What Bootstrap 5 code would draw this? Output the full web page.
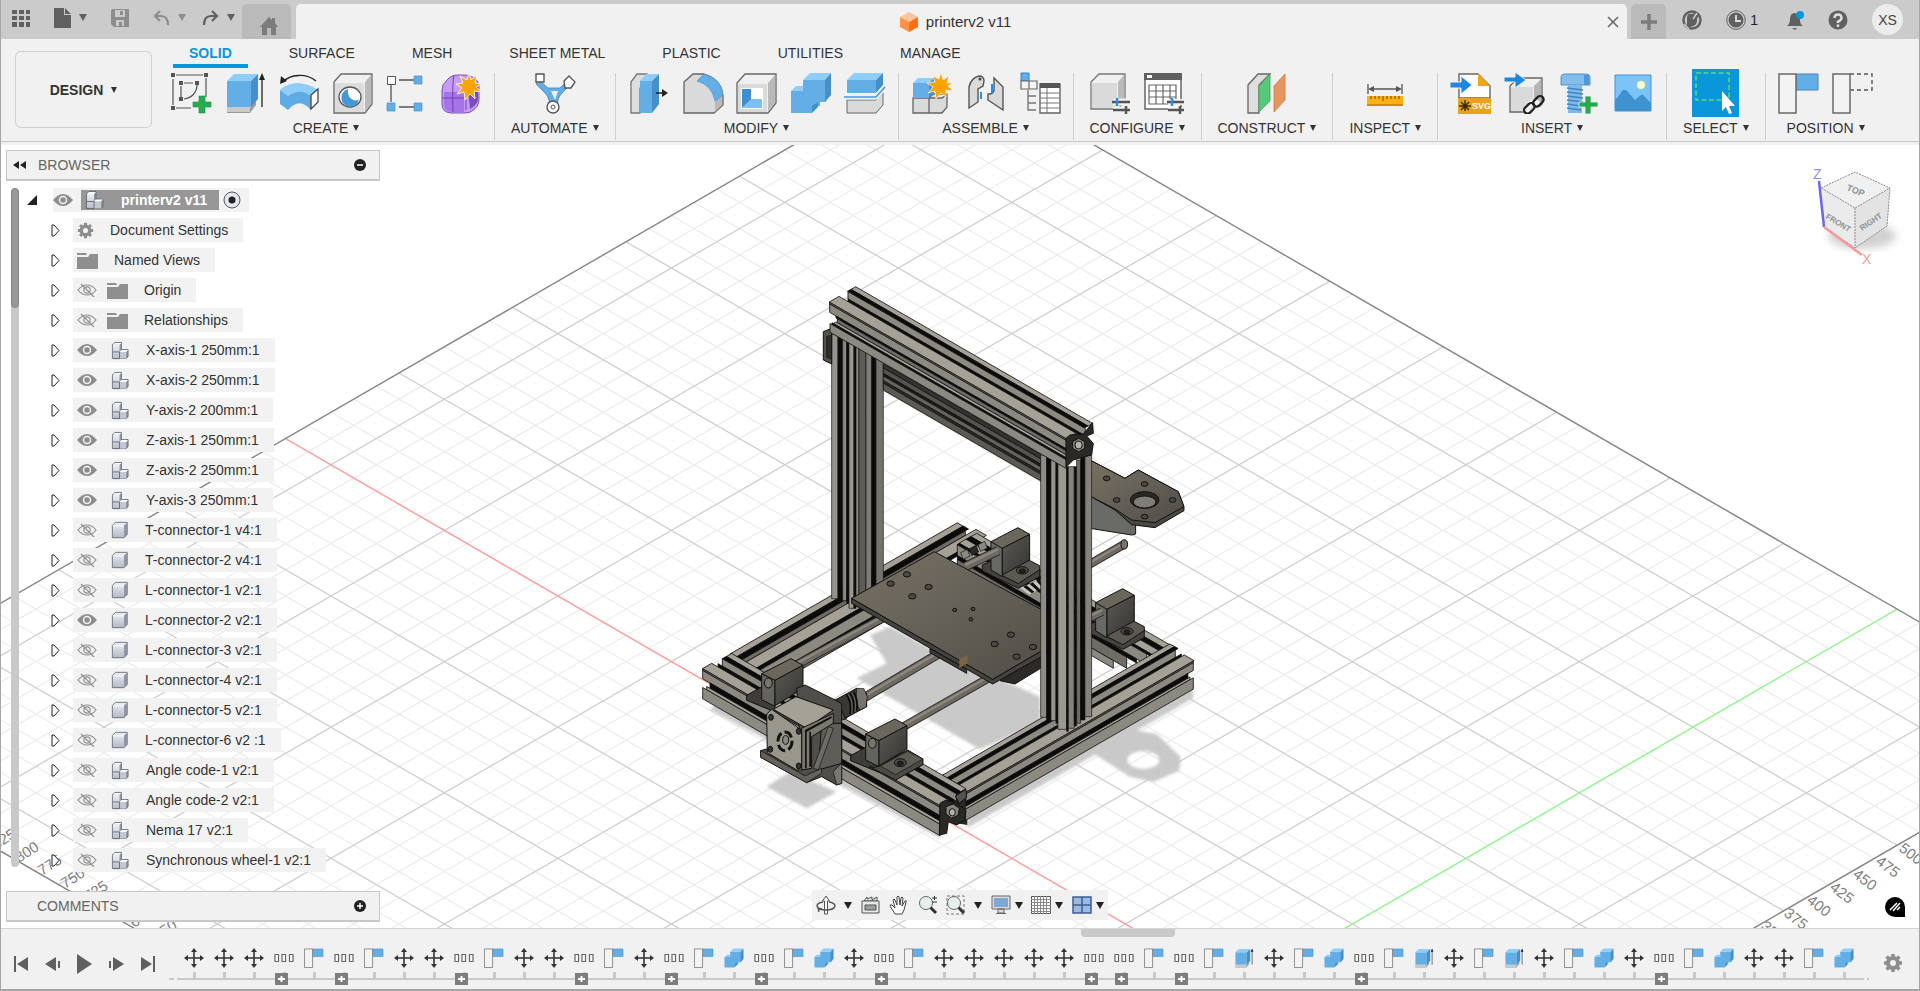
<!DOCTYPE html>
<html lang="en">
<head>
<meta charset="utf-8">
<meta name="viewport" content="width=device-width, initial-scale=1">
<title>printerv2 v11</title>
<link href="https://cdn.jsdelivr.net/npm/bootstrap@5.3.0/dist/css/bootstrap.min.css" rel="stylesheet">
<style>
  body { font: 14px/20px "Liberation Sans", Arial, sans-serif; color: #333; background: #f1f1f1; }
  button { background: none; border: 0; padding: 0; color: inherit; line-height: inherit; }
  svg { display: block; flex: none; }
  .app { border: solid #a6a6a6; border-width: 0 1px 2px; }
  .tri { width: 0; height: 0; border: 4px solid transparent; border-top: 7px solid currentColor; border-bottom: 0; }
  .ribbon .tri { border-width: 6px 3px 0; }
  .titlebar { background: #cbcbcb; height: 39px; color: #606060; padding-left: 11px; }
  .quick { width: 230px; }
  .faded { color: #8d8d8d; }
  .home-tab, .plus-tab { background: #bababa; height: 35px; border-radius: 5px 5px 0 0; color: #7c7c7c; }
  .home-tab { width: 49px; margin-right: 5px; }
  .plus-tab { width: 35px; }
  .doc-tab { background: #f1f1f1; height: 35px; border-radius: 5px 5px 0 0; font-size: 15px; color: #333; }
  .avatar { width: 31px; height: 31px; border-radius: 50%; background: #ececec; color: #444; }
  .ribbon { border-bottom: 1px solid #c9c9c9; height: 103px; }
  .under { height: 3px; }
  .workspace { width: 157px; padding: 12px 6px 0 14px; }
  .workspace button { height: 77px; border: 1px solid #cfcfcf; border-radius: 6px; }
  .tabs { gap: 25px; height: 30px; padding-left: 15px; }
  .tabs a { color: #333; text-decoration: none; padding: 4px 16px 0; height: 29px; }
  .tabs a.on { color: #0a96db; font-weight: 700; border-bottom: 4px solid #0a96db; }
  .tool-group { height: 67px; padding: 0 6px; }
  .tool-group + .tool-group { border-left: 1px solid #cfcfcf; }
  .cells { height: 49px; margin-top: -4px; }
  .cell { width: 54px; height: 48px; }
  .group-label { padding: 0 10px; gap: 5px; }
  .view { background: #fff; min-height: 0; }
  .panel { border: 1px solid #c8c8c8; border-bottom-width: 2px; background: #f1f1f1; width: 374px; height: 31px; color: #666; padding: 0 13px 0 6px; }
  .side { position: absolute; top: 5px; bottom: 6px; left: 5px; }
  .tree { list-style: none; }
  .tree li { height: 30px; }
  .tree .label-box { background: #f2f2f2; height: 24px; padding-right: 15px; color: #333; }
  .track { width: 8px; background: #c8c9cb; border-radius: 4px; margin: 7px 0 24px 5px; }
  .thumb { height: 120px; background: #999; border: 1px solid #858585; border-radius: 4px; }
  .arrow { width: 30px; }
  .eye { width: 26px; }
  .root-name { background: #979797; color: #fff; font-weight: 700; height: 20px; }
  .navbar-view { position: absolute; bottom: 8px; left: 50%; margin-left: -148px; width: 296px; height: 30px; background: #f1f1f1; color: #222; }
  .assist { position: absolute; right: 14px; bottom: 11px; }
  .cube { position: absolute; right: 15px; top: 15px; }
  .timeline { height: 61px; border-top: 1px solid #d4d4d4; position: relative; color: #606060; }
  .handle { position: absolute; top: 0; left: 1080px; width: 94px; height: 8px; background: #c9c9c9; border-radius: 0 0 4px 4px; }
  .transport { width: 152px; padding-top: 10px; }
  .steps { margin-left: 16px; }
  .step { width: 30px; height: 60px; padding-top: 19px; position: relative; }
  .step::after { content: ""; position: absolute; left: 0; right: 0; top: 43px; height: 8px; border-bottom: 2px solid #c9c9c9; background: linear-gradient(#c9c9c9,#c9c9c9) 14px 0/3px 8px no-repeat; }
  .step .plus { position: absolute; left: 6px; top: 44px; z-index: 1; }
  .dash { width: 10px; height: 2px; margin-top: 49px; background: linear-gradient(90deg,#c9c9c9 60%,transparent 60%) 0 0/8px 2px; }
</style>
</head>
<body>
<svg width="0" height="0" class="position-absolute" aria-hidden="true">
  <defs>
    <linearGradient id="gb" x1="0" y1="0" x2="0" y2="1"><stop offset="0" stop-color="#eef0f4"/><stop offset="1" stop-color="#b4b9c6"/></linearGradient>
    <linearGradient id="plateg" x1="0" y1="0" x2="1" y2="1"><stop offset="0" stop-color="#77705f"/><stop offset=".35" stop-color="#6b665c"/><stop offset="1" stop-color="#504d47"/></linearGradient>
    <linearGradient id="bodyg" x1="0" y1="0" x2="1" y2="1"><stop offset="0" stop-color="#5e5b54"/><stop offset="1" stop-color="#34332f"/></linearGradient>
    <filter id="soft"><feGaussianBlur stdDeviation="4"/></filter>
  </defs>
  <symbol id="i-sketch" viewBox="0 0 42 42"><g fill="none" stroke="#555" stroke-width="1.2"><path d="M6 3h27M3 7v26M36 6v19M6 36h15M14 11h9M11 14v11M27 13c0 7-5 13-13 14"/></g><path fill="#555" d="M1 1h4v4H1zM34 1h4v4h-4zM1 34h4v4H1zM9 9h4v4H9zM25 9h4v4h-4zM9 25h4v4H9z"/><path fill="#26ab4e" stroke="#1c9440" stroke-width=".6" d="M29 24h6v6h6v5h-6v6h-6v-6h-6v-5h6z"/></symbol>
  <symbol id="i-extrude" viewBox="0 0 42 42"><path fill="#999" d="M3 36h23l6-7v4l-6 8H3z"/><path fill="#c9c9c9" d="M3 35h23v5H3z"/><path fill="#64aee6" d="M3 9h24v26H3z"/><path fill="#8fcdfb" d="M3 9l7-7h24l-7 7z"/><path fill="#4590cb" d="M27 9l7-7v25l-7 8z"/><path stroke="#222" stroke-width="1.3" d="M38 4v31"/><path fill="#222" d="M38 1l3 7h-6z"/></symbol>
  <symbol id="i-revolve" viewBox="0 0 42 42"><path fill="#8fcdfb" d="M2 18C10 9 28 9 40 18l-7 6c-8-6-15-6-23 0z"/><path fill="#5fabe4" d="M2 18l8 6v14l-8-6zM10 24c8-6 15-6 23 0v14c-8-9-15-9-23 0z"/><path fill="#fff" stroke="#444" stroke-width="1.3" d="M33 23l7-6v13l-7 7z"/><path fill="none" stroke="#222" stroke-width="1.3" d="M5 10C12 2 28 1 38 9"/><path fill="#222" d="M2 12l1-8 6 5z"/></symbol>
  <symbol id="i-hole" viewBox="0 0 42 42"><path fill="#f0f0f0" stroke="#6a6a6a" stroke-width="1.3" d="M2 10l7-8h31v30l-7 9H2z"/><path fill="#dcdcdc" d="M3 11h29v29H3z"/><path fill="#b9b9b9" d="M33 10l6-7v29l-6 8z"/><ellipse cx="18" cy="25" rx="11" ry="10" fill="#fff" stroke="#555" stroke-width="1.3"/><path fill="#4898d6" d="M16 17a9 9 0 1 0 11 11c-7 2-12-3-11-11z"/></symbol>
  <symbol id="i-pattern" viewBox="0 0 42 42"><path stroke="#555" stroke-width="1.3" d="M13 8h16M5 13v17M13 35h16"/><path fill="#fff" stroke="#555" d="M1.5 4.500h8v8h-8z"/><path fill="#64aee6" stroke="#4a90c8" stroke-width=".7" d="M28 4h8v8h-8zM28 31h8v8h-8zM1 31h8v8H1z"/></symbol>
  <symbol id="i-form" viewBox="0 0 42 42"><path fill="#c69cf8" stroke="#7b53b8" d="M2 18q0-6 5-10 4-5 11-5h8q12 2 13 11v13q0 8-7 12-2 2-8 2H12Q2 41 2 32z"/><path fill="#a673e8" d="M4 20h20v20H12q-8 0-8-8z"/><path fill="#7b4bc0" d="M28 18l10-5v14q0 5-8 10z"/><path fill="none" stroke="#6d45ae" d="M2 26h24l12-7M14 3q-2 7-1 37M26 18v20"/><path fill="#f9a400" stroke="#f1f1f1" stroke-width="1" d="M29 0l2 8 6-5-2 8 7 1-6 3 6 5-8-1 1 8-5-5-5 6-1-8-7 2 5-6-6-4 7-1-3-7 7 4z"/></symbol>
  <symbol id="i-auto" viewBox="0 0 42 42"><path fill="#64aee6" stroke="#3f86be" stroke-width=".8" d="M5 8l9 8h12l8-8 3 4-9 9q-6 6-4 16h-9q2-10-4-16l-9-9z"/><path fill="#f1f1f1" d="M17 19h7l-3 9z"/><path fill="#fff" stroke="#555" stroke-width="1.4" d="M2 2h8v8H2zM30 9l5-5 6 6-4 6h-6z"/><circle cx="19" cy="35" r="6" fill="#fff" stroke="#555" stroke-width="1.4"/><circle cx="19" cy="35" r="2" fill="none" stroke="#555"/></symbol>
  <symbol id="i-press" viewBox="0 0 42 42"><path fill="#dedede" stroke="#777" stroke-width="1.3" d="M3 10l6-8h10v8l-7 6v25H3z"/><path fill="#64aee6" d="M12 9h12v32H12z"/><path fill="#8fcdfb" d="M12 9l6-7h13l-7 7z"/><path fill="#4590cb" d="M24 9l7-7v30l-7 9z"/><path stroke="#222" stroke-width="1.5" d="M28 21h9"/><path fill="#222" d="M34 17l6 4-6 4z"/></symbol>
  <symbol id="i-fillet" viewBox="0 0 42 42"><path fill="#dadada" stroke="#666" stroke-width="1.3" d="M2 10l9-8h11q17 5 19 22v9l-9 8H2z"/><path fill="#b9b9b9" d="M33 28l7-4v9l-7 7z"/><path fill="#64aee6" stroke="#4590cb" stroke-width=".7" d="M15 9l7-7q18 5 19 21l-8 6Q30 13 15 9z"/></symbol>
  <symbol id="i-shell" viewBox="0 0 42 42"><path fill="#f0f0f0" stroke="#666" stroke-width="1.3" d="M1 11l8-9h31v29l-8 10H1z"/><path fill="#dadada" d="M2 12h29v28H2z"/><path fill="#b9b9b9" d="M32 11l7-8v28l-7 8z"/><path fill="#fff" d="M5 16h22v21H5z"/><path fill="#3f8fd0" d="M6 17h9v11l-9 8z"/><path fill="#7cc0f5" d="M6 36l9-9h11v9z"/></symbol>
  <symbol id="i-combine" viewBox="0 0 42 42"><path fill="#64aee6" d="M1 19h12V8h23v22h-6v4h-8v7H1z"/><path fill="#8fcdfb" d="M13 8l7-7h21l-6 7zM1 19l5-5h7v5z"/><path fill="#4590cb" d="M35 8l6-7v22l-6 7zM22 34l6-4v5l-6 6z"/></symbol>
  <symbol id="i-split" viewBox="0 0 42 42"><path fill="#8fcdfb" d="M3 8l7-7h29l-7 7z"/><path fill="#64aee6" d="M3 8h29v13H3z"/><path fill="#4590cb" d="M32 8l7-7v12l-7 8z"/><path fill="#dadada" stroke="#666" stroke-width="1" d="M3 28h29l7-8v13l-7 8H3z"/><path fill="none" stroke="#f1f1f1" stroke-width="5" d="M0 25h32l9-10"/><path fill="none" stroke="#3f9be8" stroke-width="1.6" d="M0 25h32l9-10"/></symbol>
  <symbol id="i-newcomp" viewBox="0 0 42 42"><path fill="#dadada" stroke="#666" stroke-width="1.3" d="M2 26h16l4-4h14v13l-5 6H2zM18 26v15M18 26h13l5-4"/><path fill="#64aee6" d="M2 11h16v15H2z"/><path fill="#8fcdfb" d="M2 11l5-5h16l-5 5z"/><path fill="#4590cb" d="M18 11l5-5v15l-5 5z"/><path fill="#f9a400" stroke="#f1f1f1" stroke-width=".8" d="M30 0l2 8 6-4-2 7 6 0-5 3 5 5-7-1 0 7-5-4-5 6-1-8-7 2 5-6-6-4 8-1-2-6 6 3z"/></symbol>
  <symbol id="i-joint" viewBox="0 0 42 42"><path fill="#dadada" stroke="#555" stroke-width="1.4" d="M4 36V15Q6 6 14 4q5 0 5 5l-1 5-5 3v13zM25 22q4-1 4-4V6l9 9v23l-9-6-6-4v-6z"/><path stroke="#2490e6" stroke-width="2" d="M16 20v7M27 12v9"/><circle cx="15" cy="7" r="1.5" fill="#444"/></symbol>
  <symbol id="i-bom" viewBox="0 0 42 42"><path fill="#64aee6" stroke="#3a80ba" d="M2 1h8v8H2z"/><path fill="#f5f5f5" stroke="#666" stroke-width="1.2" d="M2 9h8v8H2zM10 9h8v8h-8z"/><path fill="none" stroke="#777" stroke-width="1.4" d="M9 18v20h8M9 24h8M9 31h8"/><path fill="#fff" stroke="#666" stroke-width="1.4" d="M21 12h20v29H21z"/><path fill="#555" d="M21 11h20v5H21z"/><path fill="none" stroke="#777" d="M21 21h20M21 26h20M21 31h20M21 36h20M28 16v25"/></symbol>
  <symbol id="i-conf" viewBox="0 0 42 42"><path fill="#f0f0f0" stroke="#777" stroke-width="1.3" d="M2 10l8-8h26v27l-7 8H2z"/><path fill="#dadada" d="M3 11h25v25H3z"/><path fill="#bababa" d="M29 10l6-7v26l-6 7z"/><path stroke="#f1f1f1" stroke-width="7" d="M24 30h17M24 38h17"/><path stroke="#555" stroke-width="2.5" d="M23 30h18M24 38h17M37 34v8"/><path stroke="#2490e6" stroke-width="2.5" d="M28 26v8"/></symbol>
  <symbol id="i-ctable" viewBox="0 0 42 42"><path fill="#fff" stroke="#666" stroke-width="1.5" d="M2 2h36v35H2z"/><path fill="#606060" d="M1 1h38v7H1z"/><path fill="#fff" d="M4 3h5v3H4z"/><path fill="none" stroke="#666" stroke-width="1.2" d="M6 13h27v19H6zM6 19h27M6 25h27M13 13v19M20 13v19M27 13v19"/><path stroke="#f4f4f4" stroke-width="6" d="M25 30h16M25 38h16"/><path stroke="#555" stroke-width="2.5" d="M24 30h17M25 38h16M37 34v8"/><path stroke="#2490e6" stroke-width="2.5" d="M29 26v8"/></symbol>
  <symbol id="i-plane" viewBox="0 0 42 42"><path fill="#dedede" stroke="#666" stroke-width="1.3" d="M2 13L12 2h12L13 13v28H2z"/><path fill="#57c878" stroke="#3aa75c" stroke-width=".8" d="M13 14L24 2v27L13 40z"/><path fill="#e89660" stroke="#cc7a45" stroke-width=".8" d="M28 14L39 2v26L28 40z"/></symbol>
  <symbol id="i-measure" viewBox="0 0 42 42"><path stroke="#555" stroke-width="1.3" d="M4 12v10M38 12v10M6 17h30"/><path fill="#555" d="M4 17l6-3v6zM38 17l-6-3v6z"/><path fill="#fbb116" d="M3 24h36v9H3z"/><path stroke="#6b4a00" d="M7 24v3M11 24v3M15 24v3M19 24v5M23 24v3M27 24v3M31 24v3M35 24v3"/><path fill="#d28c00" d="M3 32h36v2H3z"/></symbol>
  <symbol id="i-svg" viewBox="0 0 42 42"><path fill="#fff" stroke="#666" stroke-width="1.4" d="M9 26V2h19l12 12v12z"/><path fill="#f0a61c" d="M28 1l12 13H28z"/><path fill="#e9a21c" d="M8 26h33v16H8z"/><path stroke="#3b2a00" stroke-width="1.5" d="M15 28v11M9 34h12M11 30l8 8M19 30l-8 8"/><text x="22" y="37" font-size="9" font-weight="700" fill="#fff" font-family="Liberation Sans, sans-serif">SVG</text><path fill="#1f87e0" stroke="#f1f1f1" d="M0 10h11V4l11 9-11 9v-6H0z"/></symbol>
  <symbol id="i-link" viewBox="0 0 42 42"><path fill="#f0f0f0" stroke="#666" stroke-width="1.3" d="M6 14l8-8h24v26l-8 8H6z"/><path fill="#dadada" d="M7 15h22v24H7z"/><path fill="#b5b5b5" d="M30 14l7-7v24l-7 8z"/><path fill="#1f87e0" stroke="#f1f1f1" d="M0 5h11V0l11 8-11 8v-6H0z"/><g fill="none" stroke="#f1f1f1" stroke-width="6"><rect x="22" y="32" width="13" height="7" rx="3.5" transform="rotate(-45 28 36)"/></g><g fill="none" stroke="#222" stroke-width="2.3"><rect x="19" y="33" width="12" height="7" rx="3.5" transform="rotate(-45 25 36)"/><rect x="28" y="26" width="12" height="7" rx="3.5" transform="rotate(-45 34 29)"/></g></symbol>
  <symbol id="i-bolt" viewBox="0 0 42 42"><path fill="#84bdec" stroke="#4f94cb" d="M3 5q0-3 4-3h21q4 0 4 3v8H3z"/><path fill="#4f98d4" d="M26 3h5v10h-5z"/><path fill="#7fb9e8" d="M10 13h14v28H10z"/><path fill="none" stroke="#3f86c0" stroke-width="1.4" d="M9 16l16 2M9 20l16 2M9 24l16 2M9 28l16 2M9 32l14 2M9 36l14 2"/><path fill="#26ab4e" stroke="#f1f1f1" stroke-width=".8" d="M27 24h6v6h7v5h-7v7h-6v-7h-6v-5h6z"/></symbol>
  <symbol id="i-image" viewBox="0 0 42 42"><path fill="#7cc4f8" stroke="#4a8fc6" d="M3 3h36v36H3z"/><circle cx="29" cy="13" r="4" fill="#fffbd0" stroke="#e8e08a" stroke-width=".6"/><path fill="#3f92d0" d="M3 28q4-4 7-9 3-3 6 1l7 8 6-5q2-1 4 2l6 6v8H3z"/></symbol>
  <symbol id="i-select" viewBox="0 0 47 48"><path fill="#0a96db" d="M0 0h47v48H0z"/><path fill="none" stroke="#5edc6c" stroke-width="1.5" stroke-dasharray="5 2.5" d="M4 4h33v27H4z"/><path fill="#fff" d="M30 22v20l4-4 3 7 3-1-3-7h6z"/></symbol>
  <symbol id="i-flag" viewBox="0 0 42 42"><path fill="#64aee6" stroke="#3f86c0" d="M18 2h22v16H18z"/><path fill="#f3f3f3" stroke="#6a6a6a" stroke-width="1.5" d="M1 2h17v39H1z"/></symbol>
  <symbol id="i-flagd" viewBox="0 0 42 42"><path fill="none" stroke="#555" stroke-width="1.4" stroke-dasharray="4 3" d="M18 2h22v16H18"/><path fill="#f3f3f3" stroke="#6a6a6a" stroke-width="1.5" d="M1 2h17v39H1z"/></symbol>

  <symbol id="k-eye" viewBox="0 0 20 14"><path fill="#8d8d8d" d="M0 7Q5 1 10 1t10 6q-5 6-10 6T0 7z"/><circle cx="10" cy="7" r="3.5" fill="none" stroke="#f2f2f2" stroke-width="1.5"/></symbol>
  <symbol id="k-hid" viewBox="0 0 20 14"><path fill="none" stroke="#909090" stroke-width="1.2" d="M1 7q4-5 9-5t9 5q-4 5-9 5T1 7zM4 1l13 13"/><circle cx="10" cy="7" r="3.2" fill="none" stroke="#909090" stroke-width="1.2"/></symbol>
  <symbol id="k-comp" viewBox="0 0 20 20"><path fill="#8d94a3" stroke="#5d6472" stroke-width=".8" d="M1.500 4L4 1.500h7V9h7v7.500L16 18.500H1.500z"/><path fill="url(#gb)" d="M2 4h7v15H2z"/><path fill="#c3c8d3" d="M9 11.500h7v7H9z"/><path fill="#fff" d="M2 4l2-2h7L9 4zM9 11.500L11 9.500h7l-2 2z"/><path fill="none" stroke="#5d6472" stroke-width=".9" d="M2 11.500h7v7M9 18.500H2"/></symbol>
  <symbol id="k-body" viewBox="0 0 20 20"><path fill="url(#gb)" stroke="#666d7a" d="M1.500 5L5 1.500h13V15l-3.500 3.500h-13z"/><path fill="#8d94a3" d="M14.500 5L18 2v13l-3.500 3z"/><path stroke="#fff" fill="none" d="M2 5.500h12"/></symbol>
  <symbol id="k-folder" viewBox="0 0 21 17"><path fill="#8f8f8f" d="M0 5h11l2-3h8v15H0zM0 1h9l1 2H0z"/></symbol>
  <symbol id="k-gear" viewBox="0 0 20 20"><circle cx="10" cy="10" r="5" fill="none" stroke="currentColor" stroke-width="4"/><path stroke="currentColor" stroke-width="3.5" d="M10 1v3M10 16v3M1 10h3M16 10h3M3.600 3.600l2 2M14.400 14.400l2 2M3.600 16.400l2-2M14.400 5.600l2-2"/></symbol>

  <symbol id="t-m" viewBox="0 0 20 20"><path stroke="#333" stroke-width="1.6" d="M10 3v14M3 10h14"/><path fill="#333" d="M10 0l3 4H7zM10 20l3-4H7zM0 10l4-3v6zM20 10l-4-3v6z"/></symbol>
  <symbol id="t-g" viewBox="0 0 20 20"><path fill="#fff" stroke="#666" stroke-width="1.2" d="M1 6.500h3.500v7H1zM8 6.500h3.500v7H8zM15.500 6.500H19v7h-3.500z"/></symbol>
</svg>

<div class="app d-flex flex-column vh-100 overflow-hidden">
  <header class="titlebar d-flex align-items-end">
    <div class="quick d-flex align-items-center align-self-center pb-1">
      <button class="me-4" aria-label="Data panel"><svg width="18" height="18" fill="currentColor"><path d="M0 1h5v4H0zM7 1h5v4H7zM14 1h4v4h-4zM0 7h5v4H0zM7 7h5v4H7zM14 7h4v4h-4zM0 13h5v5H0zM7 13h5v5H7zM14 13h4v5h-4z"/></svg></button>
      <button class="d-flex align-items-center gap-2 me-4" aria-label="File"><svg width="17" height="20" fill="currentColor"><path d="M0 0h10v7h7v13H0zM11 0l6 6h-6z"/></svg><span class="tri"></span></button>
      <button class="faded me-4" aria-label="Save"><svg width="18" height="18" fill="currentColor"><path fill-rule="evenodd" d="M0 2q0-2 2-2h16v18H3l-3-3zM4 1v7h10V1zM5 11v6h3v-4h3v4h2v-6z"/><path d="M9 2h3v4H9z"/></svg></button>
      <button class="faded d-flex align-items-center gap-2 me-3" aria-label="Undo"><svg width="17" height="16" fill="none" stroke="currentColor" stroke-width="2.200"><path d="M7 1L2 6l5 5M2 6h6q7 0 7 9"/></svg><span class="tri"></span></button>
      <button class="d-flex align-items-center gap-2" aria-label="Redo"><svg width="17" height="16" fill="none" stroke="currentColor" stroke-width="2.200"><path d="M10 1l5 5-5 5M15 6H9Q2 6 2 15"/></svg><span class="tri"></span></button>
    </div>
    <button class="home-tab d-flex justify-content-center align-items-center pt-2 ps-1" aria-label="Home"><svg width="18" height="18" fill="currentColor"><path fill-rule="evenodd" d="M9 0l3 3V1h3v5l3 4h-2v8H2v-8H0zM7 11v7h4v-7z"/></svg></button>
    <div class="doc-tab d-flex align-items-center flex-grow-1 px-2">
      <div class="d-flex align-items-center gap-1 mx-auto"><svg width="18" height="20"><path fill="#ffc59a" d="M9 0l9 5-9 5-9-5z"/><path fill="#ff9148" d="M0 5l9 5v10l-9-5z"/><path fill="#ff6f0f" d="M18 5l-9 5v10l9-5z"/></svg><span class="ms-1">printerv2 v11</span></div>
      <button aria-label="Close"><svg width="12" height="12" stroke="#666" stroke-width="1.5"><path d="M1 1l10 10M11 1L1 11"/></svg></button>
    </div>
    <button class="plus-tab d-flex justify-content-center align-items-center ms-1" aria-label="New design"><svg width="16" height="16" stroke="currentColor" stroke-width="3.5"><path d="M8 0v16M0 8h16"/></svg></button>
    <div class="d-flex align-items-center align-self-center ms-3">
      <button class="me-4" aria-label="Extensions"><svg width="20" height="20"><circle cx="10" cy="10" r="8.500" fill="none" stroke="currentColor" stroke-width="2.5"/><path fill="currentColor" d="M5 17V8q0-5 5-4l5-2-3 4 5-2-2 5q1 8-10 8z"/><path stroke="#cbcbcb" stroke-width="1.5" d="M11 9l4-6M2 14l5 5"/></svg></button>
      <button class="d-flex align-items-center gap-1 me-4" aria-label="Jobs"><svg width="20" height="20"><circle cx="10" cy="10" r="9.300" fill="none" stroke="currentColor"/><circle cx="10" cy="10" r="7.500" fill="currentColor"/><path fill="none" stroke="#e0e0e0" stroke-width="1.8" d="M10 5v6h5"/></svg><span class="text-body">1</span></button>
      <button class="ms-1 me-4" aria-label="Notifications"><svg width="18" height="20"><path fill="currentColor" d="M1 16q3-2 3-7 0-5 4-6 6 1 6 7 0 4 3 6zM6 18h5l-2 2z"/><circle cx="14" cy="5" r="4" fill="#0a96db"/></svg></button>
      <button class="me-4" aria-label="Help"><svg width="20" height="20"><circle cx="10" cy="10" r="9.500" fill="currentColor"/><path fill="none" stroke="#e0e0e0" stroke-width="2.4" d="M6.500 8q0-3.500 3.500-3.500T13.500 8q0 2-3.500 3.500V13M10 14.500V17"/></svg></button>
      <button class="avatar me-3">XS</button>
    </div>
  </header>

  <section class="ribbon d-flex">
    <div class="workspace"><button class="w-100 fw-bold d-flex justify-content-center align-items-center gap-2">DESIGN <span class="tri"></span></button></div>
    <div class="flex-grow-1">
      <nav class="tabs d-flex"><a class="on" href="#">SOLID</a><a href="#">SURFACE</a><a href="#">MESH</a><a href="#">SHEET METAL</a><a href="#">PLASTIC</a><a href="#">UTILITIES</a><a href="#">MANAGE</a></nav>
      <div class="d-flex mt-1" id="groups"></div>
    </div>
  </section>
  <div class="under"></div>

  <main class="view flex-grow-1 position-relative overflow-hidden">
    <svg id="scene" class="position-absolute w-100 h-100" viewBox="1 145 1918 783" preserveAspectRatio="xMidYMid slice" role="img" aria-label="3D printer frame on a grid">
      <g id="grid" fill="none"></g>
      <g id="rulers" font-size="15" fill="#808080" font-family="Liberation Sans, sans-serif"></g>
      <g id="model" transform="translate(690 510) scale(.3333)" stroke-linejoin="round"></g>
    </svg>

    <div class="side d-flex flex-column">
      <div class="panel d-flex align-items-center"><svg width="13" height="10" fill="#222"><path d="M6 1v8L0 5zM13 1v8L7 5z"/></svg><span class="ms-2 ps-1 flex-grow-1">BROWSER</span><button aria-label="Collapse browser"><svg width="12" height="12"><circle cx="6" cy="6" r="6" fill="#222"/><path stroke="#fff" stroke-width="1.5" d="M3 6h6"/></svg></button></div>
      <div class="d-flex flex-grow-1 overflow-hidden">
        <div class="track"><div class="thumb"></div></div>
        <ul class="tree m-0 p-0 pt-1" id="tree"></ul>
      </div>
      <div class="panel d-flex align-items-center"><span class="flex-grow-1 ps-4">COMMENTS</span><button aria-label="Add comment"><svg width="12" height="12"><circle cx="6" cy="6" r="6" fill="#222"/><path stroke="#fff" stroke-width="1.5" d="M3 6h6M6 3v6"/></svg></button></div>
    </div>

    <svg class="cube" width="96" height="110" viewBox="1808 160 96 110" font-family="Liberation Sans, sans-serif">
      <ellipse cx="1862" cy="236" rx="34" ry="13" fill="#000" opacity=".18" filter="url(#soft)"/>
      <path fill="#f0f0f0" d="M1855 172l35 16-35 20-34-20z"/><path fill="#ebebeb" d="M1821 188l34 20v40l-31-21z"/><path fill="#e3e3e3" d="M1890 188l-35 20v40l32-22z"/>
      <path fill="none" stroke="#8a8a8a" stroke-dasharray="2 1" d="M1821 188l34-16 35 16-35 20zM1824 227l31 21 32-22 3-38M1855 208v40"/>
      <path stroke="#6a66ec" stroke-width="2.5" d="M1819 181l5 46"/><path stroke="#f49a98" stroke-width="2.5" d="M1824 227l38 28"/>
      <g fill="#8d9298" font-weight="700"><text font-size="9" transform="translate(1846 190) rotate(22)">TOP</text><text transform="translate(1825 218) rotate(31)" font-size="8">FRONT</text><text transform="translate(1862 231) rotate(-34)" font-size="8">RIGHT</text></g>
      <text x="1813" y="179" font-size="14" fill="#8f8cf5">Z</text><text x="1862" y="264" font-size="14" fill="#f49a98">X</text>
    </svg>

    <div class="navbar-view d-flex align-items-center justify-content-between px-1">
      <button class="d-flex align-items-center gap-2" aria-label="Orbit"><svg width="20" height="20" fill="#f8f8f8" stroke="#555"><path d="M8.500 19V6h-2L10 1l3.500 5h-2v13z"/><path fill="none" stroke-width="1.4" d="M7 7Q1 8 1 11q1 4 9 4t9-4q0-3-6-4M3 17l-1-4 4 1"/></svg><span class="tri"></span></button>
      <button aria-label="Look at"><svg width="20" height="20" stroke="#555" fill="#e8e8e8"><path d="M3 6l3-4v2l5-2v3l5-3v4z"/><path d="M1 6h17v12H1z"/><path fill="#9a9fa6" d="M4 10h11v5H4z"/></svg></button>
      <button aria-label="Pan"><svg width="20" height="20" fill="#fff" stroke="#444"><path d="M6 19L1 11q0-2 2-1l3 3-2-8q1-2 2 0l2 5V2q1-2 2 0l1 8 1-7q1-2 2 0l-1 8 3-5q2-1 1 1l-2 8-2 4z"/></svg></button>
      <button aria-label="Zoom"><svg width="20" height="20"><path stroke="#333" stroke-width="3" d="M12 12l6 6"/><circle cx="8" cy="8" r="6.500" fill="#e6efed" stroke="#666"/><path stroke="#333" d="M14 3h5M16.500 1v4M14 7h5"/></svg></button>
      <button class="d-flex align-items-center gap-2" aria-label="Zoom window"><svg width="20" height="20"><path fill="none" stroke="#777" stroke-dasharray="3 2" d="M1 1h17v18H1z"/><path stroke="#333" stroke-width="3" d="M12 12l6 6"/><circle cx="8" cy="8" r="6.500" fill="#e6efed" stroke="#666"/></svg><span class="tri"></span></button>
      <button class="d-flex align-items-center gap-1" aria-label="Display settings"><svg width="20" height="20"><path fill="#ddd" stroke="#666" d="M1 1h18v13H1zM7 14h6v4H7zM5 18.500h10"/><path fill="#7ea6d8" d="M3 3h14v9H3z"/></svg><span class="tri"></span></button>
      <button class="d-flex align-items-center gap-1" aria-label="Grid and snaps"><svg width="20" height="20"><path fill="#fff" stroke="#555" d="M.5 1.500h19v17H.5z"/><path stroke="#888" d="M3.500 1v18M6.500 1v18M9.500 1v18M12.500 1v18M15.500 1v18M0 4.500h20M0 7.500h20M0 10.500h20M0 13.500h20M0 16.500h20"/></svg><span class="tri"></span></button>
      <button class="d-flex align-items-center gap-1" aria-label="Viewports"><svg width="20" height="18"><path fill="#9cbbe2" stroke="#3f5f92" stroke-width="1.5" d="M1 1h18v16H1zM10 1v16M1 9h18"/></svg><span class="tri"></span></button>
    </div>

    <button class="assist" aria-label="Assistant"><svg width="20" height="20"><path d="M10 0a10 10 0 0 1 10 10v10H10A10 10 0 0 1 10 0z"/><path stroke="#fff" stroke-width="1.5" d="M5 13l7-7M8 14l7-8M12 13l3-3"/></svg></button>
  </main>

  <footer class="timeline d-flex">
    <div class="handle"></div>
    <div class="transport d-flex align-items-center ps-1">
      <button class="ms-2 me-3" aria-label="To start"><svg width="16" height="16" fill="currentColor"><path d="M1 0h2v16H1zM15 1v14L4 8z"/></svg></button>
      <button class="me-3" aria-label="Step back"><svg width="16" height="16" fill="currentColor"><path d="M11 1v14L0 8zM13 5h2v7h-2z"/></svg></button>
      <button class="me-3" aria-label="Play"><svg width="15" height="20" fill="currentColor"><path d="M0 0l15 10L0 20z"/></svg></button>
      <button class="me-3" aria-label="Step forward"><svg width="16" height="16" fill="currentColor"><path d="M5 1v14l11-7zM1 5h2v7H1z"/></svg></button>
      <button aria-label="To end"><svg width="16" height="16" fill="currentColor"><path d="M13 0h2v16h-2zM1 1v14l11-7z"/></svg></button>
    </div>
    <div class="steps d-flex" id="steps"></div>
    <button class="faded ms-auto me-3 pt-2" aria-label="Timeline settings"><svg width="20" height="20"><use href="#k-gear"/></svg></button>
  </footer>
</div>

<script src="https://cdn.jsdelivr.net/npm/bootstrap@5.3.0/dist/js/bootstrap.bundle.min.js"></script>
<script>
const $ = id => document.getElementById(id);

/* ribbon */
const groups = [
  ['CREATE', 'sketch extrude revolve hole pattern form'], ['AUTOMATE', 'auto'],
  ['MODIFY', 'press fillet shell combine split'], ['ASSEMBLE', 'newcomp joint bom'],
  ['CONFIGURE', 'conf ctable'], ['CONSTRUCT', 'plane'], ['INSPECT', 'measure'],
  ['INSERT', 'svg link bolt image'], ['SELECT', 'select'], ['POSITION', 'flag flagd']];
$('groups').innerHTML = groups.map(([name, icons]) => `<div class="tool-group">
  <div class="cells d-flex justify-content-center">${icons.split(' ').map(i => {
    const [w, h] = i === 'select' ? [47, 48] : [42, 42];
    return `<button class="cell d-flex justify-content-center align-items-center" aria-label="${i}"><svg width="${w}" height="${h}"><use href="#i-${i}"/></svg></button>`;
  }).join('')}</div>
  <button class="group-label d-flex justify-content-center align-items-center w-100">${name}<span class="tri"></span></button></div>`).join('');

/* browser tree: name, icon, visibility (1 shown, 0 hidden, - none) */
const rows = [['Document Settings','gear','-'],['Named Views','folder','-'],['Origin','folder',0],['Relationships','folder',0],
  ['X-axis-1 250mm:1','comp',1],['X-axis-2 250mm:1','comp',1],['Y-axis-2 200mm:1','comp',1],['Z-axis-1 250mm:1','comp',1],
  ['Z-axis-2 250mm:1','comp',1],['Y-axis-3 250mm:1','comp',1],['T-connector-1 v4:1','body',0],['T-connector-2 v4:1','body',0],
  ['L-connector-1 v2:1','body',0],['L-connector-2 v2:1','body',1],['L-connector-3 v2:1','body',0],['L-connector-4 v2:1','body',0],
  ['L-connector-5 v2:1','body',0],['L-connector-6 v2 :1','body',0],['Angle code-1 v2:1','comp',0],['Angle code-2 v2:1','comp',0],
  ['Nema 17 v2:1','comp',0],['Synchronous wheel-1 v2:1','comp',0]];
const size = { gear: [17, 17], folder: [21, 17], comp: [19, 19], body: [18, 18] };
$('tree').innerHTML = `<li class="d-flex align-items-center ps-2"><svg width="10" height="10"><path d="M10 0v10H0z" fill="#222"/></svg>
  <div class="label-box d-flex align-items-center ms-3 pe-2"><svg width="20" height="14"><use href="#k-eye"/></svg>
  <span class="root-name d-flex align-items-center ms-2 ps-1 pe-2"><svg width="20" height="20" class="me-3"><use href="#k-comp"/></svg><span class="me-1">printerv2 v11</span></span>
  <svg width="18" height="18" class="ms-1"><circle cx="9" cy="9" r="8" fill="#e3e8ef" stroke="#555"/><circle cx="9" cy="9" r="3.500" fill="#222"/></svg></div></li>` +
 rows.map(([n, k, v]) => `<li class="d-flex align-items-center"><span class="arrow ms-4 ps-1"><svg class="ms-1" width="9" height="13"><path d="M1 1v11h2l5-5.500L3 1z" fill="#fff" stroke="#222"/></svg></span>
  <span class="label-box d-flex align-items-center ps-1">${v === '-' ? '' : `<span class="eye me-1"><svg width="20" height="14"><use href="#k-${v ? 'eye' : 'hid'}"/></svg></span>`}
  <svg class="faded me-3 ${k === 'comp' || k === 'body' ? 'ms-1' : ''}" width="${size[k][0]}" height="${size[k][1]}"><use href="#k-${k}"/></svg><span>${n}</span></span></li>`).join('');

/* timeline: m move, g group, f position, b combine, e extrude */
const seq = 'mmmgfgfmmgfmmgfmgfbgfbmgfmmmmmggfgfemfbgfemfemfbmgfbmmfb';
const sym = { m: 't-m', g: 't-g', f: 'i-flag', b: 'i-combine', e: 'i-extrude' };
$('steps').innerHTML = '<span class="dash"></span>' + [...seq].map(c => `<div class="step"><button class="d-block mx-auto" aria-label="Timeline feature"><svg width="20" height="20"><use href="#${sym[c]}"/></svg></button>${
  c === 'g' ? '<svg class="plus" width="13" height="12"><path fill="#7d7d7d" d="M0 0h13v12H0z"/><path stroke="#fff" stroke-width="2" d="M3 6h7M6.500 3v6"/></svg>' : ''}</div>`).join('') + '<span class="dash"></span>';

/* ground grid: lines y = c + s*x and y = d - s*x */
const s = .578, m = 26.24, red = 273.5, green = 1705.7;
const cMin = red - 29 * m, cMax = red + 22 * m, dMin = 603.6, dMax = green + 9 * m;
const meet = (c, d) => [(d - c) / (2 * s), (c + d) / 2];
let g = '';
const line = (a, b, st, w) => g += `<path stroke="${st}" stroke-width="${w}" d="M${a.map(v => v.toFixed(1))}L${b.map(v => v.toFixed(1))}"/>`;
const fam = major => {
  for (let i = -29; i <= 22; i++) if ((i % 5 === 0) === major && i) line(meet(red + i * m, dMin), meet(red + i * m, dMax), major ? '#cfcfcf' : '#ececec', major ? 1.3 : 1.2);
  for (let j = 9; j >= -42; j--) if ((j % 5 === 0) === major && j) line(meet(cMin, green + j * m), meet(cMax, green + j * m), major ? '#cfcfcf' : '#ececec', major ? 1.3 : 1.2);
};
fam(false); fam(true);
line(meet(red, dMin), meet(red, dMax), '#ff9d9d', 1.5);
line(meet(cMin, green), meet(cMax, green), '#93f58f', 1.5);
[[cMin, dMin, cMin, dMax], [cMax, dMin, cMax, dMax], [cMin, dMin, cMax, dMin], [cMin, dMax, cMax, dMax]].forEach(q => line(meet(q[0], q[1]), meet(q[2], q[3]), '#868686', 1.4));
$('grid').innerHTML = g;
let r = '';
[825, 800, 775, 750, 725, 700, 675, 650].forEach((n, i) => r += `<text transform="translate(${-4 + i * 23} ${850 + i * 13}) rotate(-33)">${n}</text>`);
[500, 475, 450, 425, 400, 375, 350].forEach((n, i) => r += `<text transform="translate(${1898 - i * 23} ${850 + i * 13}) rotate(38)">${n}</text>`);
$('rulers').innerHTML = r;

/* printer model */
const L = '#a5a196', F = '#8c8981', D = '#6f6c65', K = '#0b0b0a';
let out = '';
const poly = (pts, fill, w = 3) => out += `<polygon points="${pts}" fill="${fill}" stroke="#111" stroke-width="${w}"/>`;
const bare = (pts, fill) => out += `<polygon points="${pts}" fill="${fill}"/>`;
const hole = (x, y, rx, ry, fill = '#4b4943') => out += `<ellipse cx="${x}" cy="${y}" rx="${rx}" ry="${ry}" fill="${fill}" stroke="#111" stroke-width="3"/>`;
/* strips along y = y0 + sl*(x - x0): each [k1, k2, fill, xStart, xEnd, lies on the top face] */
const rail = (x0, y0, sl, list) => list.forEach(([a, b, f, p, q, top]) => {
  const sh = top ? -Math.sign(sl) * (b - a) / 1.155 : 0, Y = (x, k) => y0 + sl * (x - x0) + k;
  poly(`${p},${Y(p, a)} ${q},${Y(q, a)} ${q + sh},${Y(q + sh, b)} ${p + sh},${Y(p + sh, b)}`, f, 2.5);
});
const rod = (x1, y1, x2, y2, w) => out += `<path d="M${x1} ${y1}L${x2} ${y2}" stroke="#222" stroke-width="${w}"/><path d="M${x1} ${y1}L${x2} ${y2}" stroke="#6e6a61" stroke-width="${w - 5}"/><path d="M${x1} ${y1 - w / 6}L${x2} ${y2 - w / 6}" stroke="#8d8980" stroke-width="${w / 4}"/>`;
const post = list => list.forEach(([a, b, f, t, e]) => poly(`${a},${t} ${b},${t} ${b},${e} ${a},${e}`, f, 2));

/* shadows */
out += '<g filter="url(#soft)" fill="#c9c9c9">' +
 '<path d="M540 375L600 350 720 415 1050 560V640L870 718 500 505 590 460zM230 830L300 785 440 845 350 895zM60 600L240 695V670L80 580zM750 985L450 825V800L770 950zM830 955L1510 565V520L840 900z"/>' +
 '<path fill-rule="evenodd" d="M1210 730L1330 660 1400 672 1472 740 1468 782 1390 815 1320 800zM1312 750a48 27 0 1 0 96 0a48 27 0 1 0-96 0z"/></g>';

/* rear left rail */
rail(120, 432, -.577, [[0, 20, L, 120, 802, 1], [20, 38, K, 137, 820, 1], [38, 52, D, 150, 826], [52, 88, L, 150, 858, 1], [88, 100, K, 180, 870, 1], [100, 135, F, 200, 760], [135, 142, K, 210, 760], [142, 170, D, 250, 740]]);
rod(310, 470, 590, 318, 26);
/* rear cross rail */
rail(860, 70, .577, [[0, 20, L, 860, 1452, 1], [20, 36, K, 842, 1434, 1], [36, 60, L, 828, 1420, 1], [60, 68, K, 808, 1400, 1], [68, 100, F, 802, 1370], [100, 112, K, 802, 1340], [112, 145, D, 802, 1310], [145, 168, F, 802, 1270]]);
for (let i = 0; i < 3; i++) poly(`${812 + i * 26},${128 - i * 12} ${832 + i * 26},${118 - i * 12} ${840 + i * 26},${138 - i * 12} ${820 + i * 26},${148 - i * 12}`, i % 2 ? '#2a2926' : F, 2);
for (let i = 0; i < 7; i++) bare(`${990 + i * 10},${234 - i * 4} ${998 + i * 10},${229 - i * 4} ${1026 + i * 8},${248 - i * 4} ${1018 + i * 8},${254 - i * 4}`, i % 2 ? '#111' : '#c8c5ba');
/* top right bracket and its rod */
rod(1190, 168, 1303, 103, 26); hole(1303, 103, 10, 14, '#77736a');
poly('1200,-45 1325,28 1337,45 1337,72 1325,75 1200,55', '#6a6b66');
poly('1200,-150 1305,-95 1345,-120 1465,-55 1482,-10 1482,2 1395,53 1325,44 1275,0 1200,-42', '#4a4842');
poly('1200,-150 1305,-95 1345,-120 1465,-55 1482,-10 1395,38 1325,30 1275,-3 1200,-42', 'url(#plateg)');
hole(1364, -30, 43, 25, '#2a2926'); hole(1364, -24, 34, 18, '#807d76');
[[1250, -95], [1364, -78], [1448, -30], [1280, -30], [1364, 20]].forEach(p => hole(p[0], p[1], 10, 7));
/* rear bearing blocks */
const block = (x, y) => {
  poly(`${x - 60},${y + 90} ${x},${y + 60} ${x + 112},${y + 100} ${x + 112},${y + 125} ${x + 48},${y + 160} ${x - 60},${y + 108}`, '#45433e');
  poly(`${x},${y + 100} ${x + 66},${y + 68} ${x + 112},${y + 92} ${x + 112},${y + 104} ${x + 48},${y + 146} ${x},${y + 122}`, '#5c5951');
  poly(`${x - 34},${y + 20} ${x},${y + 36} ${x},${y + 125} ${x - 34},${y + 105}`, '#686964');
  poly(`${x - 34},${y + 20} ${x + 47},${y - 22} ${x + 82},${y - 2} ${x},${y + 40}`, '#6b675d');
  poly(`${x},${y + 40} ${x + 82},${y - 2} ${x + 82},${y + 75} ${x},${y + 120}`, 'url(#bodyg)');
  hole(x + 60, y + 106, 18, 11); hole(x + 60, y + 108, 9, 6, '#222');
};
block(937, 75); rod(825, 170, 925, 122, 28);
block(1251, 258); rod(1195, 325, 1236, 305, 26);
/* left column */
post([[425, 444, '#96938a', -528, 266], [444, 458, K, -525, 268], [458, 470, F, -515, 272], [470, 477, K, -510, 280], [477, 492, '#9b988e', -505, 295], [492, 498, K, -500, 295], [498, 507, F, -495, 290], [507, 528, '#5f5c56', -490, 270], [528, 545, '#7f7c75', -480, 260], [545, 558, K, -470, 250], [558, 580, '#75726b', -462, 235]]);
poly('400,-535 425,-545 425,-438 400,-450', '#55524b'); poly('410,-520 425,-525 425,-452 410,-458', '#2f2e2a', 2);
/* lower rear beam */
rail(580, -440, .577, [[0, 14, '#35332f', 580, 1052], [14, 30, '#57544d', 580, 1052], [30, 38, '#1c1b19', 580, 1052], [38, 52, '#66635b', 580, 1052], [52, 60, '#2a2926', 580, 1052], [60, 80, '#5d5a53', 580, 1052]]);
/* screws under the bed */
rod(525, 562, 745, 432, 28); rod(640, 650, 895, 505, 26);
poly('720,415 830,478 830,490 720,428', '#3d3b37'); poly('930,512 1052,440 1052,475 975,522', '#2b2a27');
/* bed */
poly('485,265 908,508 1090,402 1090,420 908,522 485,280', '#45433e');
poly('485,265 733,125 1090,318 1090,402 908,508', 'url(#plateg)');
[[651, 193], [602, 221], [716, 231], [667, 259], [963, 374], [914, 402], [1029, 411], [980, 440]].forEach(p => hole(p[0], p[1], 11, 8));
[[794, 300], [849, 297], [843, 328]].forEach(p => hole(p[0], p[1], 6, 5));
bare('808,448 833,434 833,460 808,474', '#7a6544');
/* right base rail */
bare('775,815 832,840 832,945 800,940 775,870', '#2a2926');
rail(755, 797, -.577, [[0, 16, L, 757, 1440, 1], [16, 28, K, 771, 1454, 1], [28, 50, F, 775, 1456], [50, 58, K, 785, 1474], [58, 92, L, 800, 1483, 1], [92, 97, D, 828, 1510], [97, 120, F, 828, 1510], [120, 134, K, 828, 1494], [134, 142, L, 826, 1500], [142, 176, F, 826, 1510]]);
/* right column */
post([[1052, 1070, '#8f8c84', -165, 622], [1070, 1083, K, -160, 630], [1083, 1098, '#96938a', -152, 632], [1098, 1104, K, -145, 640], [1104, 1130, '#9b988e', -140, 658], [1130, 1135, K, -130, 664], [1135, 1153, '#85827b', -130, 655], [1153, 1160, K, -130, 648], [1160, 1172, D, -150, 640], [1172, 1185, K, -160, 630], [1185, 1205, '#85827b', -165, 620]]);
/* front base rail */
rail(65, 462, .577, [[-66, -48, L, 125, 828, 1], [-48, -34, K, 109, 812, 1], [-34, -12, F, 97, 800], [-12, -2, K, 84, 790], [-2, 30, L, 65, 776, 1], [30, 35, D, 38, 750], [35, 60, F, 38, 750], [60, 76, K, 60, 760], [76, 86, L, 50, 765], [86, 120, F, 38, 750]]);
poly('750,880 768,870 800,880 828,900 825,930 800,945 775,935 770,970 748,975', '#2a2926');
poly('768,890 790,882 808,895 805,915 785,925 768,912', '#88857c'); hole(787, 907, 9, 11, '#b5b2a6');
poly('796,858 828,838 830,862 808,880', '#55534d');
/* top beam */
rail(497, -670, .577, [[0, 16, L, 497, 1208, 1], [16, 28, K, 483, 1194, 1], [28, 50, F, 474, 1186], [50, 58, K, 474, 1180], [58, 92, L, 447, 1158, 1], [92, 97, D, 419, 1130], [97, 122, F, 419, 1130], [122, 128, K, 438, 1140], [128, 140, D, 442, 1148], [140, 149, L, 438, 1148, 1], [149, 155, K, 426, 1140], [155, 181, F, 420, 1130]]);
poly('1128,-215 1140,-225 1180,-228 1208,-262 1210,-230 1190,-222 1210,-200 1205,-165 1185,-160 1150,-150 1128,-128', '#2a2926');
poly('1148,-205 1166,-215 1184,-205 1184,-185 1166,-175 1148,-185', '#88857c'); hole(1166, -195, 11, 12, '#b5b2a6');
/* front bearing blocks */
const fblock = (x, y, foot) => {
  poly(`${x - 85},${y + 45} ${x - 40},${y + 20} ${x},${y + 40} ${x},${y + 95} ${x - 85},${y + 60}`, '#3e3d39');
  if (foot) { poly(`${x - 10},${y + 80} ${x + 86},${y + 28} ${x + 132},${y + 55} ${x + 132},${y + 72} ${x + 50},${y + 118} ${x - 30},${y + 78}`, '#4c4a44'); poly(`${x + 4},${y + 76} ${x + 86},${y + 32} ${x + 132},${y + 55} ${x + 50},${y + 102}`, '#5f5c54', 2); hole(x + 64, y + 66, 18, 12); hole(x + 64, y + 68, 9, 6, '#222'); }
  poly(`${x - 40},${y - 20} ${x},${y} ${x},${y + 78} ${x - 40},${y + 58}`, '#63645f');
  poly(`${x - 40},${y - 20} ${x + 48},${y - 65} ${x + 84},${y - 45} ${x},${y}`, '#6b675d');
  poly(`${x},${y} ${x + 84},${y - 45} ${x + 84},${y + 25} ${x},${y + 76}`, 'url(#bodyg)');
  hole(x - 20, y + 8, 12, 15, '#77746b');
};
fblock(255, 511, false); fblock(567, 692, true);
/* coupler */
poly('425,575 440,568 480,590 470,625 450,632', '#5a5750');
poly('440,568 500,535 530,550 530,590 465,625 455,600', '#3a3834');
poly('500,535 522,536 532,560 528,592 508,600 498,570', '#77746b', 2);
out += '<path d="M470 555q16 22 10 58M480 550q16 22 10 58M490 545q16 22 10 58" fill="none" stroke="#0b0b0a" stroke-width="5"/><path d="M475 553q16 22 10 58M485 548q16 22 10 58" fill="none" stroke="#88857c" stroke-width="2"/>';
/* stepper motor on its bracket */
poly('320,535 345,525 455,580 455,820 440,825 395,800 350,818 212,742 212,722 330,690', '#504e48');
poly('395,640 455,640 455,760 385,780', '#5f5d57'); poly('430,785 455,760 455,820 440,825', '#7a776f', 2);
poly('415,650 430,655 385,780 370,775', '#6e6b64', 2);
poly('250,598 318,560 430,600 350,655', L);
poly('335,655 430,610 430,640 365,680 365,775 335,780', '#7b786f');
[[345, 660, 775], [358, 665, 770]].forEach(q => bare(`${q[0]},${q[1]} ${q[0] + 5},${q[1]} ${q[0] + 5},${q[2]} ${q[0]},${q[2]}`, '#111'));
bare('345,660 425,618 425,624 345,668', '#111');
poly('230,612 245,598 320,650 335,665 335,780 320,780 232,728', '#99968b');
out += '<ellipse cx="285" cy="694" rx="21" ry="28" fill="none" stroke="#111" stroke-width="9" stroke-dasharray="28 10"/>';
hole(287, 690, 9, 13, '#8c8981');
[[243, 622], [326, 664], [241, 718], [326, 768]].forEach(p => hole(p[0], p[1], 7, 9, '#333'));
poly('212,722 345,798 395,775 395,790 350,818 212,742', '#65625b', 2);
$('model').innerHTML = out;
</script>
</body>
</html>
